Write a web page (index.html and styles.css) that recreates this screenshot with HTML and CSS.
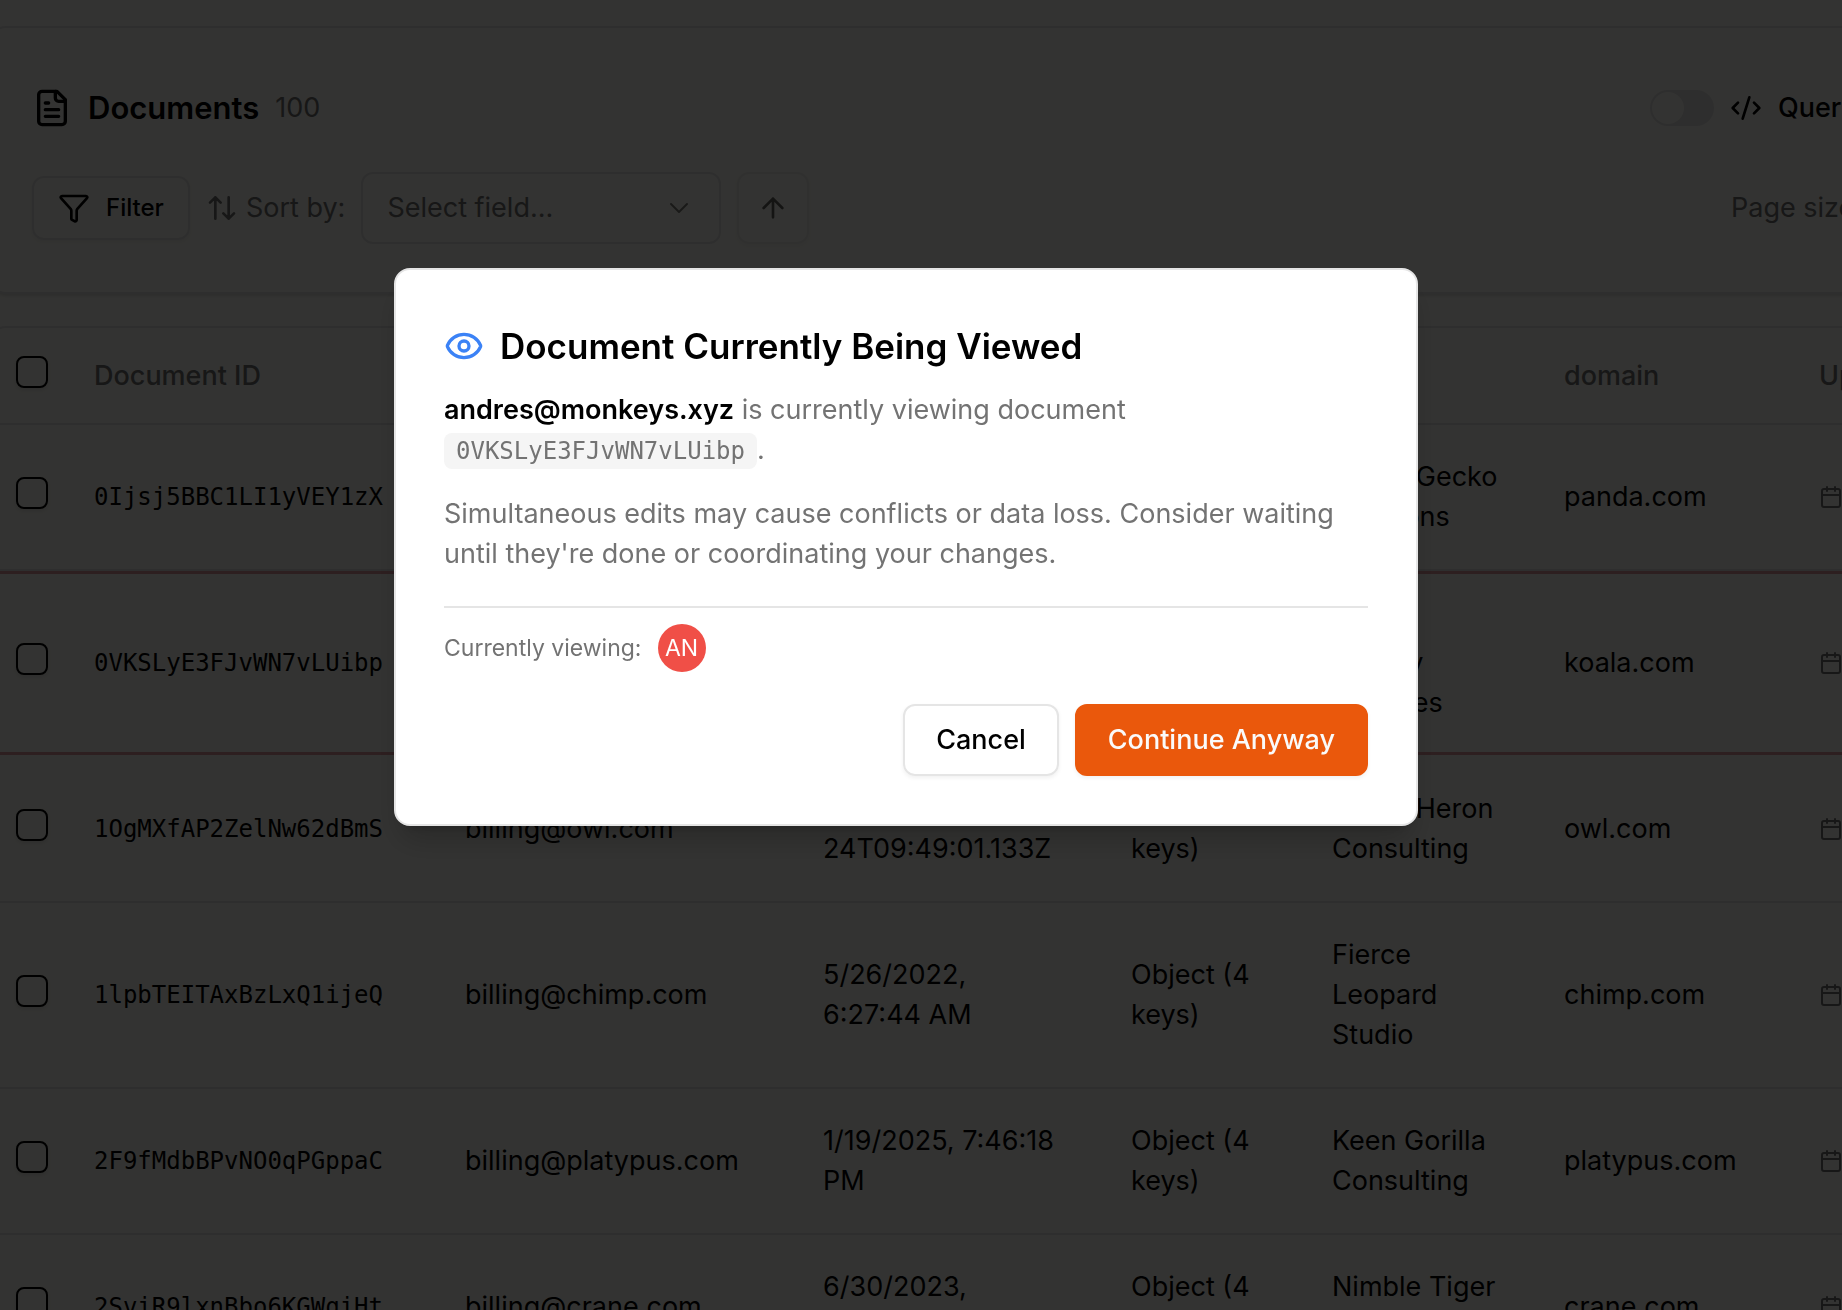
FILE: index.html
```html
<!DOCTYPE html>
<html lang="en">
<head>
<meta charset="utf-8">
<meta name="viewport" content="width=device-width, initial-scale=1">
<title>Documents</title>
<link rel="stylesheet" href="styles.css">
</head>
<body>
<svg class="sprite" aria-hidden="true">
  <symbol id="calendar" viewBox="0 0 24 24"><path d="M8 2v4M16 2v4M3 10h18"/><rect x="3" y="4" width="18" height="18" rx="2"/></symbol>
</svg>
<main class="page">
  <section class="card toolbar">
    <div class="bar">
      <svg class="icon icon-lg" viewBox="0 0 24 24"><path d="M15 2H6a2 2 0 0 0-2 2v16a2 2 0 0 0 2 2h12a2 2 0 0 0 2-2V7Z"/><path d="M14 2v4a2 2 0 0 0 2 2h4M10 9H8M16 13H8M16 17H8"/></svg>
      <h1 class="heading">Documents</h1>
      <span class="muted">100</span>
      <div class="bar-end query">
        <input class="switch" type="checkbox" role="switch" id="query-mode">
        <label class="query-label" for="query-mode">
          <svg class="icon" viewBox="0 0 24 24"><path d="m18 16 4-4-4-4M6 8l-4 4 4 4M14.500 4l-5 16"/></svg>
          Query
        </label>
      </div>
    </div>
    <div class="controls">
      <button class="button button-sm" type="button">
        <svg class="icon" viewBox="0 0 24 24"><path d="M10 20a1 1 0 0 0 .553.895l2 1A1 1 0 0 0 14 21v-7a2 2 0 0 1 .517-1.341L21.740 4.670A1 1 0 0 0 21 3H3a1 1 0 0 0-.742 1.670l7.225 7.989A2 2 0 0 1 10 14z"/></svg>
        Filter
      </button>
      <label class="sort muted" for="sort-field">
        <svg class="icon" viewBox="0 0 24 24"><path d="m21 16-4 4-4-4M17 20V4M3 8l4-4 4 4M7 4v16"/></svg>
        Sort by:
      </label>
      <div class="select-wrap">
        <select class="select" id="sort-field"><option>Select field...</option></select>
        <svg class="icon icon-thin chevron" viewBox="0 0 24 24"><path d="m6 9 6 6 6-6"/></svg>
      </div>
      <button class="button button-icon" type="button" aria-label="Ascending">
        <svg class="icon" viewBox="0 0 24 24"><path d="m5 12 7-7 7 7M12 19V5"/></svg>
      </button>
      <span class="bar-end page-size muted">Page size:</span>
    </div>
  </section>

  <section class="card table-card">
    <table class="table">
      <colgroup><col class="c-check"><col class="c-id"><col class="c-email"><col class="c-date"><col class="c-object"><col class="c-company"><col class="c-domain"><col></colgroup>
      <thead>
        <tr>
          <th class="check"><input class="checkbox" type="checkbox" aria-label="Select all"></th>
          <th>Document ID</th><th></th><th></th><th></th><th></th><th>domain</th><th>Updated</th>
        </tr>
      </thead>
      <tbody>
        <tr>
          <td class="check"><input class="checkbox" type="checkbox" aria-label="Select row"></td>
          <td class="mono">0Ijsj5BBC1LI1yVEY1zX</td><td></td><td></td><td></td>
          <td>Bright Gecko<br>Solutions</td><td>panda.com</td><td><svg class="icon icon-sm"><use href="#calendar"/></svg></td>
        </tr>
        <tr class="viewed">
          <td class="check"><input class="checkbox" type="checkbox" aria-label="Select row"></td>
          <td class="mono">0VKSLyE3FJvWN7vLUibp</td><td></td><td></td><td></td>
          <td>Wise<br>Osprey<br>Services</td><td>koala.com</td><td><svg class="icon icon-sm"><use href="#calendar"/></svg></td>
        </tr>
        <tr>
          <td class="check"><input class="checkbox" type="checkbox" aria-label="Select row"></td>
          <td class="mono">1OgMXfAP2ZelNw62dBmS</td><td>billing@owl.com</td><td>2024-05-<br>24T09:49:01.133Z</td><td>Object (4<br>keys)</td>
          <td>Bright Heron<br>Consulting</td><td>owl.com</td><td><svg class="icon icon-sm"><use href="#calendar"/></svg></td>
        </tr>
        <tr>
          <td class="check"><input class="checkbox" type="checkbox" aria-label="Select row"></td>
          <td class="mono">1lpbTEITAxBzLxQ1ijeQ</td><td>billing@chimp.com</td><td>5/26/2022,<br>6:27:44 AM</td><td>Object (4<br>keys)</td>
          <td>Fierce<br>Leopard<br>Studio</td><td>chimp.com</td><td><svg class="icon icon-sm"><use href="#calendar"/></svg></td>
        </tr>
        <tr>
          <td class="check"><input class="checkbox" type="checkbox" aria-label="Select row"></td>
          <td class="mono">2F9fMdbBPvNO0qPGppaC</td><td>billing@platypus.com</td><td>1/19/2025, 7:46:18<br>PM</td><td>Object (4<br>keys)</td>
          <td>Keen Gorilla<br>Consulting</td><td>platypus.com</td><td><svg class="icon icon-sm"><use href="#calendar"/></svg></td>
        </tr>
        <tr>
          <td class="check"><input class="checkbox" type="checkbox" aria-label="Select row"></td>
          <td class="mono">2SviR9lxnBbo6KGWqiHt</td><td>billing@crane.com</td><td>6/30/2023,<br>9:12:05 AM</td><td>Object (4<br>keys)</td>
          <td>Nimble Tiger<br>Studio</td><td>crane.com</td><td><svg class="icon icon-sm"><use href="#calendar"/></svg></td>
        </tr>
      </tbody>
    </table>
  </section>
</main>

<div class="overlay">
  <div class="dialog" role="alertdialog" aria-modal="true" aria-labelledby="dialog-title">
    <h2 class="dialog-title" id="dialog-title">
      <svg class="icon icon-lg eye" viewBox="0 0 24 24"><path d="M2.062 12.348a1 1 0 0 1 0-.696 10.750 10.750 0 0 1 19.876 0 1 1 0 0 1 0 .696 10.750 10.750 0 0 1-19.876 0"/><circle cx="12" cy="12" r="3"/></svg>
      Document Currently Being Viewed
    </h2>
    <p class="dialog-text"><strong>andres@monkeys.xyz</strong> is currently viewing document <br><code class="code">0VKSLyE3FJvWN7vLUibp</code>.</p>
    <p class="dialog-text">Simultaneous edits may cause conflicts or data loss. Consider waiting<br>until they're done or coordinating your changes.</p>
    <div class="viewers">Currently viewing: <span class="avatar">AN</span></div>
    <div class="actions">
      <button class="button" type="button">Cancel</button>
      <button class="button button-primary" type="button">Continue Anyway</button>
    </div>
  </div>
</div>
</body>
</html>
```
FILE: styles.css
```css
* { box-sizing: border-box; }

:root {
  --background: #fffff8;
  --ink: #000;
  --muted: #737373;
  --line: #e5e5e5;
}

body {
  margin: 0;
  height: 100vh;
  overflow: hidden;
  background: var(--background);
  color: var(--ink);
  font: 400 27px/40px Inter, "Liberation Sans", sans-serif;
}

h1, h2, p { margin: 0; }
button, input, select { font: inherit; color: inherit; margin: 0; }

.sprite { display: none; }

.icon {
  width: 32px;
  height: 32px;
  flex: none;
  fill: none;
  stroke: currentColor;
  stroke-width: 2;
  stroke-linecap: round;
  stroke-linejoin: round;
}
.icon-lg { width: 40px; height: 40px; }
.icon-sm { display: block; width: 24px; height: 24px; color: var(--muted); }
.icon-thin { stroke-width: 1.5; }

.muted { color: var(--muted); }

.page {
  display: flex;
  flex-direction: column;
  gap: 32px;
  padding-top: 26px;
  margin: 0 -100px 0 -10px;
}

.card {
  border: 2px solid var(--line);
  border-radius: 16px;
  background: var(--background);
  box-shadow: 0 2px 3px rgba(0, 0, 0, .12);
}

.toolbar {
  display: flex;
  flex-direction: column;
  gap: 32px;
  padding: 48px 48px 48px 40px;
}

.bar, .controls { display: flex; align-items: center; gap: 16px; }
.bar { height: 64px; }
.bar-end { margin-left: auto; }

.heading { font-size: 31px; font-weight: 600; }

.query { display: flex; align-items: center; gap: 16px; width: 242px; }
.query-label { display: flex; align-items: center; gap: 16px; font-weight: 500; }
.page-size { width: 161px; }

.switch {
  appearance: none;
  width: 64px;
  height: 36px;
  padding: 2px;
  border-radius: 18px;
  background: var(--line);
}
.switch::before {
  content: "";
  display: block;
  width: 32px;
  height: 32px;
  border-radius: 50%;
  background: var(--background);
}

.button {
  display: flex;
  align-items: center;
  justify-content: center;
  gap: 16px;
  height: 72px;
  padding: 0 31px;
  border: 2px solid var(--line);
  border-radius: 12px;
  background: transparent;
  box-shadow: 0 2px 4px rgba(0, 0, 0, .06);
  font-weight: 500;
}
.button-sm { height: 64px; padding: 0 24px; font-size: 24px; }
.button-icon { width: 72px; padding: 0; opacity: .6; }
.button-primary { border-color: #ea580c; background: #ea580c; color: #fafafa; }

.sort { display: flex; align-items: center; gap: 8px; }

.select-wrap { display: grid; align-items: center; width: 360px; }
.select-wrap > * { grid-area: 1 / 1; }
.select {
  appearance: none;
  height: 72px;
  padding: 0 24px;
  border: 2px solid var(--line);
  border-radius: 12px;
  background: transparent;
  color: var(--muted);
}
.chevron { justify-self: end; margin-right: 26px; opacity: .5; pointer-events: none; }

.table { width: 100%; table-layout: fixed; border-collapse: separate; border-spacing: 0; }
.c-check { width: 86px; }
.c-id { width: 371px; }
.c-email { width: 358px; }
.c-date { width: 308px; }
.c-object { width: 201px; }
.c-company { width: 232px; }
.c-domain { width: 255px; }

th, td { padding: 32px 0 32px 16px; border-bottom: 2px solid var(--line); text-align: left; }
th { height: 97px; padding-top: 0; padding-bottom: 0; color: var(--muted); font-weight: 500; }
.check { padding: 0 0 8px 24px; }
.mono { font: 24px/40px "DejaVu Sans Mono", monospace; }

.viewed td {
  border-bottom-color: transparent;
  background:
    linear-gradient(#df9b9f, #df9b9f) 0 0 / 100% 3px no-repeat padding-box,
    linear-gradient(#df9b9f, #df9b9f) 0 100% / 100% 3px no-repeat padding-box;
}

.checkbox {
  appearance: none;
  display: block;
  width: 32px;
  height: 32px;
  border: 2px solid var(--ink);
  border-radius: 8px;
  box-shadow: 0 2px 4px rgba(0, 0, 0, .1);
}

.overlay {
  position: fixed;
  inset: 0;
  display: flex;
  align-items: flex-start;
  justify-content: center;
  padding: 268px 30px 0 0;
  background: rgba(0, 0, 0, .8);
}

.dialog {
  width: 100%;
  max-width: 1024px;
  padding: 48px;
  border: 2px solid var(--line);
  border-radius: 16px;
  background: #fff;
  box-shadow: 0 20px 30px -6px rgba(0, 0, 0, .2), 0 8px 12px -8px rgba(0, 0, 0, .2);
}

.dialog-title {
  display: flex;
  align-items: center;
  gap: 16px;
  margin-bottom: 16px;
  font-size: 35px;
  font-weight: 600;
  line-height: 56px;
}
.eye { color: #3b82f6; }

.dialog-text { margin-bottom: 24px; color: var(--muted); }
.dialog-text strong { color: var(--ink); font-weight: 600; }
.code {
  padding: 4px 12px;
  border-radius: 8px;
  background: #f5f5f5;
  font: 24px/28px "DejaVu Sans Mono", monospace;
}

.viewers {
  display: flex;
  align-items: center;
  gap: 16px;
  margin-top: 32px;
  padding-top: 16px;
  border-top: 2px solid var(--line);
  color: var(--muted);
  font-size: 23px;
}
.avatar {
  display: grid;
  place-items: center;
  width: 48px;
  height: 48px;
  border-radius: 50%;
  background: #f04f47;
  color: #fff;
}

.actions { display: flex; justify-content: flex-end; gap: 16px; margin-top: 32px; }
```
